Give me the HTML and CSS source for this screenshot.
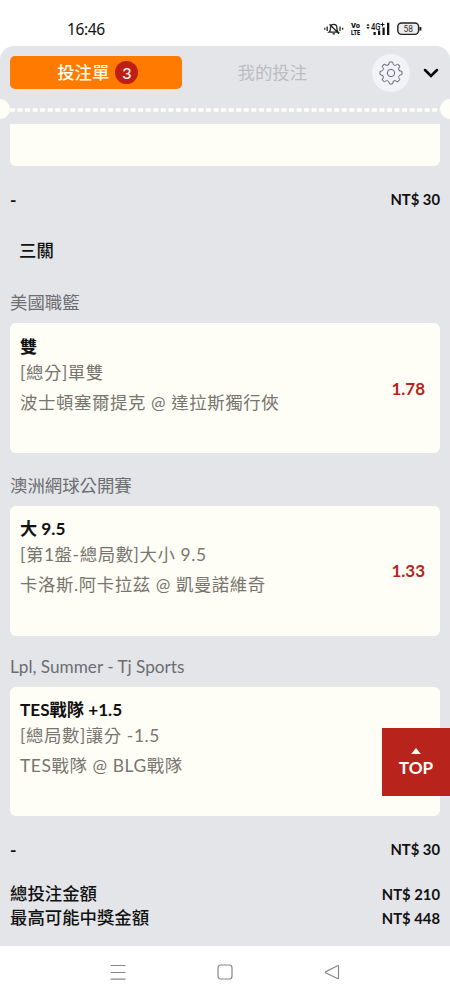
FILE: index.html
```html
<!DOCTYPE html>
<html lang="zh-Hant">
<head>
<meta charset="utf-8">
<meta name="viewport" content="width=device-width">
<title>投注單</title>
<link rel="stylesheet" href="styles.css">
</head>
<body>
<div class="phone">
  <div class="status">
    <span class="clock">16:46</span>
    <svg class="status-icons" width="100" height="18" viewBox="322 20 100 18">
      <g fill="none" stroke="#222" stroke-width="1.3">
        <path d="M329 32.2h9.2c-1.3-1-1.2-2.3-1.3-4.200 0-2-1.300-3.600-3.200-3.600s-3.200 1.600-3.200 3.600c0 2-.2 3.200-1.500 4.200zM332.500 33.800h2.500M329.500 24.300l9.500 9.500"/>
        <path d="M324.800 27.800v2M327.200 26.500v4.500M340 26.500v4.500M342.600 27.800v2"/>
      </g>
      <g fill="#111" font-family="Roboto, sans-serif" font-weight="900">
        <text x="351" y="28" font-size="7" textLength="9" lengthAdjust="spacingAndGlyphs">Vo</text>
        <text x="351" y="35.200" font-size="7" textLength="9" lengthAdjust="spacingAndGlyphs">LTE</text>
        <text x="371" y="29.500" font-size="9" font-weight="500" textLength="9.500" lengthAdjust="spacingAndGlyphs">4G</text>
      </g>
      <path fill="none" stroke="#111" d="M380.500 24.500h4M382.500 22.500v4"/>
      <path fill="#111" d="M366.300 25.800l1.700-2 1.700 2zM366.300 27l1.700 2 1.700-2zM373.500 32h2.200v3h-2.200zM378 30.500h2.200V35H378zM382.500 27.500h2.200V35h-2.200zM387 22.800h2.300V35H387z"/>
      <rect x="397.800" y="23" width="20.800" height="11.400" rx="3.800" fill="#eee" stroke="#222" stroke-width="1.400"/>
      <path d="M420.400 27v3.600" stroke="#222" stroke-width="2"/>
      <text x="408.200" y="31.800" font-family="Roboto, sans-serif" font-size="8.500" fill="#333" text-anchor="middle">58</text>
    </svg>
  </div>
  <div class="sheet">
    <div class="header">
      <div class="tab active"><span>投注單</span><span class="badge">3</span></div>
      <div class="tab">我的投注</div>
      <div class="gear">
        <svg width="26" height="26" viewBox="-13 -13 26 26" fill="none" stroke="#666a70" stroke-width="1">
          <defs><path id="tooth" d="M10.900-1.600Q11.200 0 10.900 1.600L9.600 1.900A2.200 2.200 0 0 0 8.130 5.440L8.840 6.580"/></defs>
          <use href="#tooth"/><use href="#tooth" transform="rotate(45)"/><use href="#tooth" transform="rotate(90)"/><use href="#tooth" transform="rotate(135)"/><use href="#tooth" transform="rotate(180)"/><use href="#tooth" transform="rotate(225)"/><use href="#tooth" transform="rotate(270)"/><use href="#tooth" transform="rotate(315)"/>
          <circle r="3.700"/>
        </svg>
      </div>
      <svg class="chevron" width="16" height="12" viewBox="0 0 16 12"><path d="M2 3l6 6 6-6" fill="none" stroke="#080808" stroke-width="2.600" stroke-linecap="round"/></svg>
    </div>
    <div class="perforation">
      <i class="notch left"></i>
      <svg width="450" height="4"><path d="M10 2H440" stroke="#fffef6" stroke-width="3.400" stroke-dasharray="5 2.540"/></svg>
      <i class="notch right"></i>
    </div>
    <div class="content">
      <div class="card-end"></div>
      <div class="stake"><span class="dash">-</span><span>NT$ 30</span></div>
      <div class="combo">三關</div>

      <div class="league">美國職籃</div>
      <div class="card">
        <div class="lines"><div class="pick">雙</div><div class="market">[總分]單雙</div><div class="teams">波士頓塞爾提克 @ 達拉斯獨行俠</div></div>
        <div class="odds">1.78</div>
      </div>
      <div class="league">澳洲網球公開賽</div>
      <div class="card tight">
        <div class="lines"><div class="pick">大 9.5</div><div class="market">[第1盤-總局數]大小 9.5</div><div class="teams">卡洛斯.阿卡拉茲 @ 凱曼諾維奇</div></div>
        <div class="odds">1.33</div>
      </div>
      <div class="league latin">Lpl, Summer - Tj Sports</div>
      <div class="card tight short">
        <div class="lines"><div class="pick">TES戰隊 +1.5</div><div class="market">[總局數]讓分 -1.5</div><div class="teams">TES戰隊 @ BLG戰隊</div></div>
      </div>
      <div class="stake last"><span class="dash">-</span><span>NT$ 30</span></div>
      <div class="total"><span class="name">總投注金額</span><span>NT$ 210</span></div>
      <div class="total"><span class="name">最高可能中獎金額</span><span>NT$ 448</span></div>
    </div>
  </div>
  <div class="nav">
    <svg width="16" height="16" viewBox="0 0 16 16"><path d="M.5 1.500h15M.5 8.500h15M.5 15.200h15" stroke="#888" stroke-width="1.200"/></svg>
    <svg width="16" height="16" viewBox="0 0 16 16"><rect x="1" y="1" width="14" height="14" rx="2.800" fill="none" stroke="#888" stroke-width="1.200"/></svg>
    <svg width="16" height="16" viewBox="0 0 16 16"><path d="M14.500 2.300v11.600q0 1.100-1 .6L2 9q-1.200-.7 0-1.400L13.500 1.700q1-.5 1 .6z" fill="none" stroke="#888" stroke-width="1.200"/></svg>
  </div>
  <div class="top">
    <svg width="10" height="6" viewBox="0 0 10 6"><path d="M5 0L9.800 6H.2z" fill="#fffef6"/></svg>
    <span>TOP</span>
  </div>
</div>
</body>
</html>
```
FILE: styles.css
```css
* { box-sizing: border-box; }
body { margin: 0; background: #fff; }
.phone {
  position: relative;
  width: 450px;
  height: 1000px;
  overflow: hidden;
  font-family: Lato, "Noto Sans CJK TC", sans-serif;
  font-size: 17.4px;
  white-space: nowrap;
  color: #111;
}
.status {
  height: 46px;
  padding: 12px 28px 0 67px;
  display: flex;
  justify-content: space-between;
}
.clock { font: 15.6px/34px "Noto Sans", sans-serif; letter-spacing: -.4px; }
.status-icons { margin-top: 8px; }
.sheet { height: 900px; background: #e4e5e9; border-radius: 14px 14px 0 0; }
.header { height: 54px; padding: 0 11px 1px 10px; display: flex; align-items: center; }
.tab {
  width: 172px;
  height: 33px;
  margin-right: 4px;
  padding-left: 2px;
  display: flex;
  align-items: center;
  justify-content: center;
  gap: 6px;
  line-height: 33px;
  color: #bcbdc1;
}
.tab.active { padding-left: 4px; background: #ff7a00; color: #fffef6; border-radius: 5px; font-weight: 500; }
.badge {
  width: 23px;
  height: 23px;
  border-radius: 50%;
  background: #be1e15;
  text-align: center;
  line-height: 23px;
  font-size: 16px;
}
.gear {
  width: 38px;
  height: 38px;
  margin-left: 11px;
  border-radius: 50%;
  background: #f2f3f8;
  display: flex;
  align-items: center;
  justify-content: center;
}
.chevron { margin-left: 13px; }
.perforation { height: 24px; display: flex; align-items: center; position: relative; padding-bottom: 4px; }
.notch { position: absolute; top: -1px; width: 20px; height: 20px; border-radius: 50%; background: #fffef6; }
.left { left: -10px; }
.right { right: -10px; }
.content { padding: 0 10px; }
.card-end { height: 42px; background: #fffef6; border-radius: 0 0 6px 6px; }
.stake, .total { display: flex; justify-content: space-between; font-size: 14.8px; font-weight: 700; }
.stake { height: 68px; line-height: 67px; }
.stake.last { height: 66px; }
.dash { font-size: 17.4px; }
.combo { height: 34px; line-height: 34px; margin-bottom: 2px; padding-left: 9px; font-weight: 500; }
.league { height: 55px; line-height: 66px; margin-bottom: -2px; color: #6b6d71; }
.latin { height: 53px; line-height: 62px; font-size: 17.2px; }
.card {
  height: 130px;
  background: #fffef6;
  border-radius: 6px;
  padding: 8px 15px 0 10px;
  display: flex;
  justify-content: space-between;
}
.card.short { height: 129px; }
.pick { height: 28px; line-height: 32px; font-size: 17.2px; font-weight: 700; color: #111; }
.market, .teams { height: 30px; line-height: 27px; letter-spacing: .6px; color: #77756f; }
.market { height: 28px; }
.teams { line-height: 31px; }
.tight .pick { height: 27px; line-height: 30px; }
.odds { margin-top: 43px; line-height: 30px; font-size: 17px; font-weight: 700; color: #b4251c; }
.tight .odds { margin-top: 42px; }
.total { height: 24px; line-height: 24px; }
.name { font-size: 17.4px; font-weight: 500; }
.nav {
  height: 54px;
  background: #fff;
  padding: 18px 110px 0;
  display: flex;
  justify-content: space-between;
}
.top {
  position: absolute;
  right: 0;
  top: 728px;
  width: 68px;
  height: 68px;
  background: #b8241c;
  color: #fffef6;
  display: flex;
  flex-direction: column;
  align-items: center;
  padding-top: 20px;
  font-size: 17.2px;
  font-weight: 700;
  line-height: 28px;
}
```
